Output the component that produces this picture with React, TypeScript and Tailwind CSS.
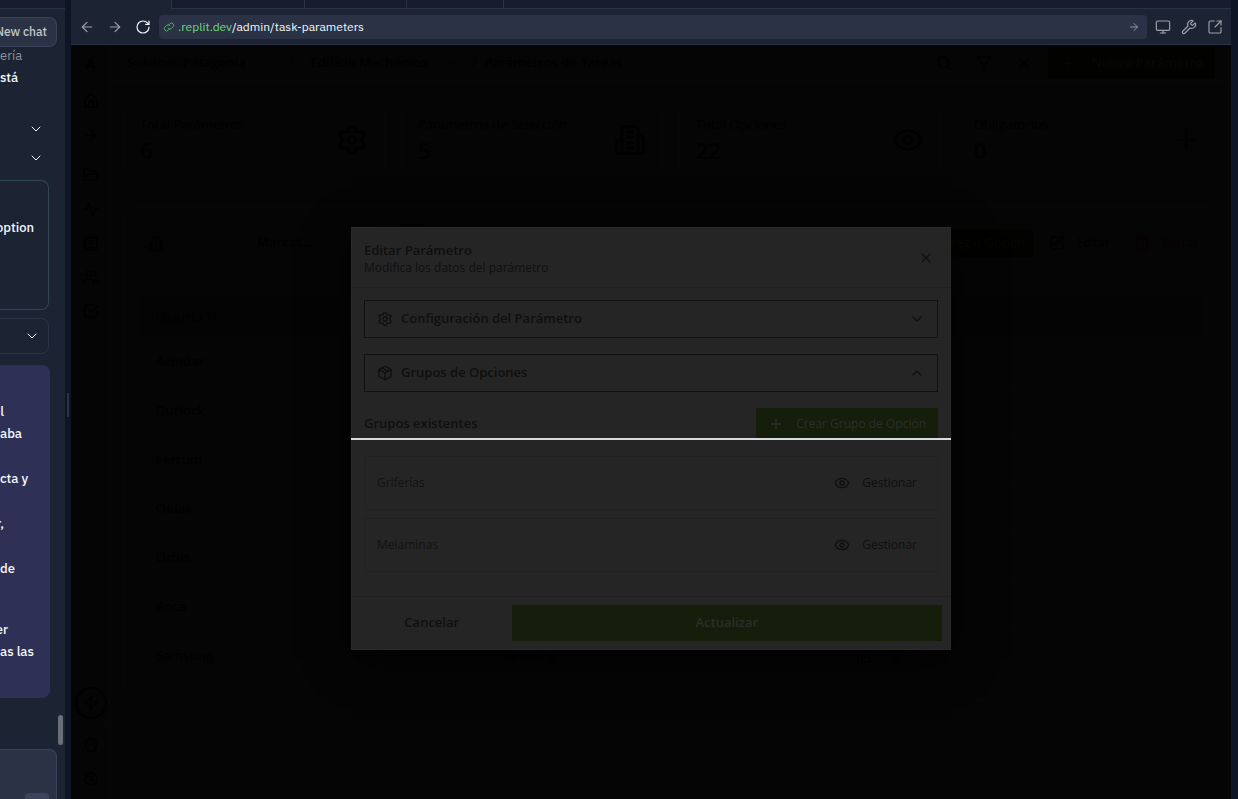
import type { ReactNode } from 'react';
import {
  Activity, ArrowLeft, ArrowRight, ArrowUpDown, ChevronDown, ChevronUp, Contact, Eye,
  Filter, FolderOpen, History, House, Monitor, Package, Plus, RotateCw, Search,
  Settings, Shield, SquareArrowOutUpRight, SquareCheckBig, SquarePen, Trash2, Users, Wrench, X, Zap,
  type LucideIcon,
} from 'lucide-react';

const brands = [
  { label: 'Acindar', slug: '' },
  { label: 'Durlock', slug: '' },
  { label: 'Ferrum', slug: '' },
  { label: 'Oblak', slug: '' },
  { label: 'Orbis', slug: '' },
  { label: 'Roca', slug: '' },
  { label: 'Samsung', slug: 'samsung' },
];
const groups = ['Griferías', 'Melaminas'];

function OfficeIcon({ className }: { className: string }) {
  return (
    <svg viewBox="0 0 24 24" fill="none" stroke="currentColor" strokeWidth="2" strokeLinecap="round" strokeLinejoin="round" className={className}>
      <path d="M6 22V4a2 2 0 0 1 2-2h8a2 2 0 0 1 2 2v18Z" />
      <path d="M6 12H4a2 2 0 0 0-2 2v6a2 2 0 0 0 2 2h2" />
      <path d="M18 9h2a2 2 0 0 1 2 2v9a2 2 0 0 1-2 2h-2" />
      <path d="M10 6h4M10 10h4M10 14h4M10 18h4" />
    </svg>
  );
}

function LinkIcon({ className }: { className: string }) {
  return (
    <svg viewBox="0 0 24 24" fill="none" stroke="currentColor" strokeWidth="2" strokeLinecap="round" strokeLinejoin="round" className={className}>
      <path d="M10.5 8.5 13.6 5.4a4.5 4.5 0 0 1 6.4 6.4l-3.2 3.2a4.5 4.5 0 0 1-6.4 0" />
      <path d="M13.5 15.5l-3.1 3.1A4.5 4.5 0 0 1 4 12.2L7.2 9a4.5 4.5 0 0 1 6.4 0" />
    </svg>
  );
}

function IconButton({ icon: Icon, label, className }: { icon: LucideIcon; label: string; className: string }) {
  return (
    <button type="button" aria-label={label} className="flex shrink-0 items-center justify-center">
      <Icon className={className} strokeWidth={1.75} />
    </button>
  );
}

function ChatPane() {
  return (
    <aside className="flex w-[65px] shrink-0 flex-col overflow-hidden bg-[#1c2333] font-['IBM_Plex_Sans','Inter',sans-serif] text-[13px] leading-[22px] text-[#f5f9fc]">
      <div className="h-[9px] shrink-0 border-b border-[#2b3245] bg-[#171d2d]" />
      <div className="mt-2 flex justify-end pr-2">
        <button type="button" className="flex h-[30px] w-full items-center justify-end rounded-r-lg border border-l-0 border-[#3c445c] bg-[#2b3245] pr-[9px] text-[12px] font-medium whitespace-nowrap text-[#c2c8cc]">
          New chat
        </button>
      </div>
      <div className="flex min-h-0 flex-1 flex-col">
        <p className="-mt-0.5 h-[22px] text-[#8d929d]">ería</p>
        <p className="h-[22px] font-medium">stá</p>
        <div className="mt-8 flex flex-col items-end gap-[13px] pr-[21px]">
          <button type="button" aria-label="Expand" className="h-4 w-4"><ChevronDown className="h-4 w-4" strokeWidth={1.5} /></button>
          <button type="button" aria-label="Expand" className="h-4 w-4"><ChevronDown className="h-4 w-4" strokeWidth={1.5} /></button>
        </div>
        <div className="mt-[14px] mr-4 flex h-[130px] justify-end rounded-r-lg border border-l-0 border-[#2f464f] pt-9 pr-[14px] font-medium">
          option
        </div>
        <div className="mt-2 mr-4 flex h-9 items-center justify-end rounded-r-lg border border-l-0 border-[#2b3245] pr-2">
          <button type="button" aria-label="Expand" className="h-4 w-4"><ChevronDown className="h-4 w-4" strokeWidth={1.5} /></button>
        </div>
        <div className="mt-[11px] mr-[15px] h-[333px] rounded-r-lg bg-[#2f3056] pt-9 font-medium whitespace-nowrap">
          <p className="flex w-1 justify-end">il</p>
          <p>aba</p>
          <p className="mt-[23px]">cta y</p>
          <p className="mt-[23px] flex w-1 justify-end">r,</p>
          <p className="mt-[23px]">de</p>
          <p className="mt-[39px] flex w-2 justify-end">er</p>
          <p>as las</p>
        </div>
        <div className="mt-[17px] mr-[2px] h-[30px] w-[5px] self-end rounded-full bg-[#6a6e79]" />
        <div className="mt-1 mr-2 flex min-h-[50px] flex-1 justify-end rounded-tr-lg border border-b-0 border-l-0 border-[#3c445c] bg-[#2b3245] pt-[43px] pr-[7px]">
          <div className="h-4 w-6 rounded bg-[#3c445c]" />
        </div>
      </div>
    </aside>
  );
}

function BrowserBar() {
  return (
    <div className="shrink-0 font-['IBM_Plex_Sans','Inter',sans-serif]">
      <div className="flex h-[9px] bg-[#171d2d]">
        <div className="w-[101px] border-r border-[#2b3245] bg-[#1c2333]" />
        <div className="w-[133px] border-r border-b border-[#2b3245]" />
        <div className="w-[102px] border-r border-b border-[#2b3245]" />
        <div className="w-[97px] border-r border-b border-[#2b3245]" />
        <div className="flex-1 border-b border-[#2b3245]" />
      </div>
      <div className="flex h-9 items-center border-b border-[#2b3245] bg-[#1c2333] px-2 text-[#9da2a6]">
        <div className="flex items-center gap-3 pr-2">
          <IconButton icon={ArrowLeft} label="Back" className="h-4 w-4" />
          <IconButton icon={ArrowRight} label="Forward" className="h-4 w-4" />
          <IconButton icon={RotateCw} label="Reload" className="h-4 w-4 text-[#f5f9fc]" />
        </div>
        <div className="flex h-6 min-w-0 flex-1 items-center rounded bg-[#2b3245] px-1 text-[12px]">
          <LinkIcon className="mr-[3px] h-3 w-3 shrink-0 text-[#4fae62]" />
          <a href="#" className="flex-1 whitespace-nowrap text-[#f5f9fc]"><span className="text-[#6cd97e]">.replit.dev</span>/admin/task-parameters</a>
          <IconButton icon={ArrowRight} label="Go" className="mr-[3px] h-3 w-3" />
        </div>
        <div className="flex items-center gap-[10px] pl-2">
          <IconButton icon={Monitor} label="Devices" className="h-4 w-4" />
          <IconButton icon={Wrench} label="Tools" className="h-4 w-4" />
          <IconButton icon={SquareArrowOutUpRight} label="Open in new tab" className="h-4 w-4" />
        </div>
      </div>
    </div>
  );
}

function Rail() {
  const icons = [FolderOpen, Activity, Contact, Users, SquareCheckBig];
  return (
    <nav className="flex w-10 shrink-0 flex-col items-center border-r border-[#070707]">
      <div className="flex h-9 w-full items-center justify-center text-[15px] font-bold">A</div>
      <House className="mt-3 h-4 w-4" />
      <ArrowRight className="mt-[18px] h-4 w-4" />
      <div className="mt-6 flex flex-col gap-[18px]">
        {icons.map((Icon, i) => <Icon key={i} className="h-4 w-4" />)}
      </div>
      <div className="mt-auto flex h-8 w-8 shrink-0 items-center justify-center rounded-full border-2 border-[#010103] text-[#010103]">
        <Zap className="h-4 w-4" />
      </div>
      <div className="mt-[3px] flex w-full flex-col items-center gap-[18px] border-t border-[#070707] pt-[14px] pb-3">
        <Shield className="h-4 w-4" />
        <History className="h-4 w-4" />
      </div>
    </nav>
  );
}

function Stat({ label, value, children }: { label: string; value: string; children: ReactNode }) {
  return (
    <section className="flex h-[86px] items-center justify-between rounded-xl border border-[#070707] px-4">
      <div>
        <p className="text-[13px] leading-5">{label}</p>
        <p className="text-[22px] leading-8 font-semibold">{value}</p>
      </div>
      {children}
    </section>
  );
}

function Dashboard() {
  return (
    <div className="flex min-w-0 flex-1 flex-col">
      <header className="flex h-9 shrink-0 items-center border-b border-[#070707] px-4 text-[13px] font-semibold">
        <span>Sukanec Patagonia</span>
        <ChevronDown className="mx-3 h-3 w-3" />
        <span className="mx-2 font-normal">/</span>
        <span className="ml-2">Edificio Machónico</span>
        <ChevronDown className="mx-4 h-3 w-3" />
        <span className="mr-2 font-normal">/</span>
        <span className="flex-1">Parámetros de Tareas</span>
        <div className="flex items-center gap-6 pr-4">
          <Search className="h-4 w-4" />
          <Filter className="h-4 w-4" />
          <X className="h-4 w-4" />
        </div>
        <button type="button" className="flex h-8 items-center gap-4 bg-[#020200] px-3 text-[#070707]">
          <Plus className="h-4 w-4" />Nuevo Parámetro
        </button>
      </header>
      <main className="flex flex-col gap-6 p-3 pt-4">
        <div className="grid grid-cols-4 gap-4">
          <Stat label="Total Parámetros" value="6"><Settings className="h-8 w-8" /></Stat>
          <Stat label="Parámetros de Selección" value="5"><OfficeIcon className="h-8 w-8" /></Stat>
          <Stat label="Total Opciones" value="22"><Eye className="h-8 w-8" /></Stat>
          <Stat label="Obligatorios" value="0"><Plus className="h-8 w-8" /></Stat>
        </div>
        <section className="rounded-xl border border-[#070707] px-4 pb-[18px] text-[13px]">
          <div className="flex h-[88px] items-start pt-4">
            <OfficeIcon className="mt-3 mr-5 ml-2 h-4 w-4" />
            <button type="button" className="flex h-[38px] w-[240px] items-center border border-[#040404] pl-[72px] font-semibold">Marcas...</button>
            <div className="mt-[5px] ml-auto flex h-7 items-center text-[12px] font-medium">
              <button type="button" className="mr-4 flex h-7 items-center gap-3 bg-[#020200] px-2 text-[#070707]"><Plus className="h-4 w-4" />Agregar Opción</button>
              <button type="button" className="mr-6 flex items-center gap-3"><SquarePen className="h-4 w-4" />Editar</button>
              <button type="button" className="mr-1 flex items-center gap-3 text-[#070101]"><Trash2 className="h-4 w-4" />Borrar</button>
            </div>
          </div>
          <table className="w-full text-left">
            <thead>
              <tr className="h-[41px] bg-[#040404] text-[12px]">
                <th className="w-1/3 pl-4 font-medium"><span className="flex items-center gap-1">Etiqueta <ArrowUpDown className="h-3 w-3" /></span></th>
                <th className="w-1/3" aria-label="Nombre" />
                <th aria-label="Acciones" />
              </tr>
            </thead>
            <tbody>
              {brands.map((brand) => (
                <tr key={brand.label} className="h-[49px] border-b border-[#060606]">
                  <td className="pl-4 font-semibold">{brand.label}</td>
                  <td className="pl-2">{brand.slug}</td>
                  <td><span className="flex gap-4 pl-2"><SquarePen className="h-4 w-4" /><Trash2 className="h-4 w-4 text-[#070101]" /></span></td>
                </tr>
              ))}
            </tbody>
          </table>
        </section>
      </main>
    </div>
  );
}

function ParameterDialog() {
  return (
    <div role="dialog" aria-labelledby="dialog-title" className="absolute inset-0 flex items-start justify-center overflow-hidden">
      <div className="relative mt-[182px] w-[600px] border border-[#2a2a2a] bg-[#252525] text-[13px] text-[#0f0f0f] shadow-[0_10px_40px_0px_#000000b0]">
        <header className="flex h-[60px] items-center justify-between border-b border-[#202020] px-3">
          <div className="pt-0.5">
            <h2 id="dialog-title" className="leading-[18px] font-semibold">Editar Parámetro</h2>
            <p className="text-[12px] leading-[18px] text-[#101010]">Modifica los datos del parámetro</p>
          </div>
          <button type="button" aria-label="Cerrar" className="mr-1"><X className="h-4 w-4" strokeWidth={1.75} /></button>
        </header>
        <div className="flex flex-col gap-4 p-3 pb-6">
          <button type="button" className="flex h-[38px] items-center border border-[#111111] px-3 font-semibold">
            <Settings className="mr-2 h-4 w-4" /><span className="flex-1 text-left">Configuración del Parámetro</span><ChevronDown className="h-4 w-4" />
          </button>
          <button type="button" className="flex h-[38px] items-center border border-[#111111] px-3 font-semibold">
            <Package className="mr-2 h-4 w-4" /><span className="flex-1 text-left">Grupos de Opciones</span><ChevronUp className="h-4 w-4" />
          </button>
          <div className="flex h-8 items-center justify-between">
            <h3 className="font-semibold">Grupos existentes</h3>
            <button type="button" className="flex h-8 items-center gap-3 bg-[#151e0b] px-3 text-[12px] font-medium text-[#2a2f2a]">
              <Plus className="h-4 w-4" />Crear Grupo de Opción
            </button>
          </div>
          <div className="flex flex-col gap-2">
            {groups.map((group) => (
              <div key={group} className="flex h-[54px] items-center justify-between border border-[#212121] pr-5 pl-3 text-[12px]">
                <span className="text-[#131313]">{group}</span>
                <button type="button" className="flex items-center gap-3 font-medium"><Eye className="h-4 w-4" />Gestionar</button>
              </div>
            ))}
          </div>
        </div>
        <footer className="flex gap-2 border-t border-[#202020] p-2 font-semibold">
          <button type="button" className="h-9 flex-1">Cancelar</button>
          <button type="button" className="h-9 flex-3 bg-[#151e0b] text-[#2a2f2a]">Actualizar</button>
        </footer>
        <div className="absolute -inset-x-px top-[210px] h-0.5 bg-[#d9dcdc]" />
      </div>
    </div>
  );
}

export default function App() {
  return (
    <div className="flex h-screen overflow-hidden bg-[#0e1525]">
      <ChatPane />
      <div className="flex w-[6px] shrink-0 items-center justify-center">
        <div className="mt-[10px] h-6 w-0.5 bg-[#2b3245]" />
      </div>
      <div className="mr-[7px] flex min-w-0 flex-1 flex-col">
        <BrowserBar />
        <div className="relative flex min-h-0 flex-1 overflow-hidden bg-[#050505] font-['Open_Sans','Noto_Sans',sans-serif] text-[#010101]">
          <Rail />
          <Dashboard />
          <ParameterDialog />
        </div>
      </div>
    </div>
  );
}
